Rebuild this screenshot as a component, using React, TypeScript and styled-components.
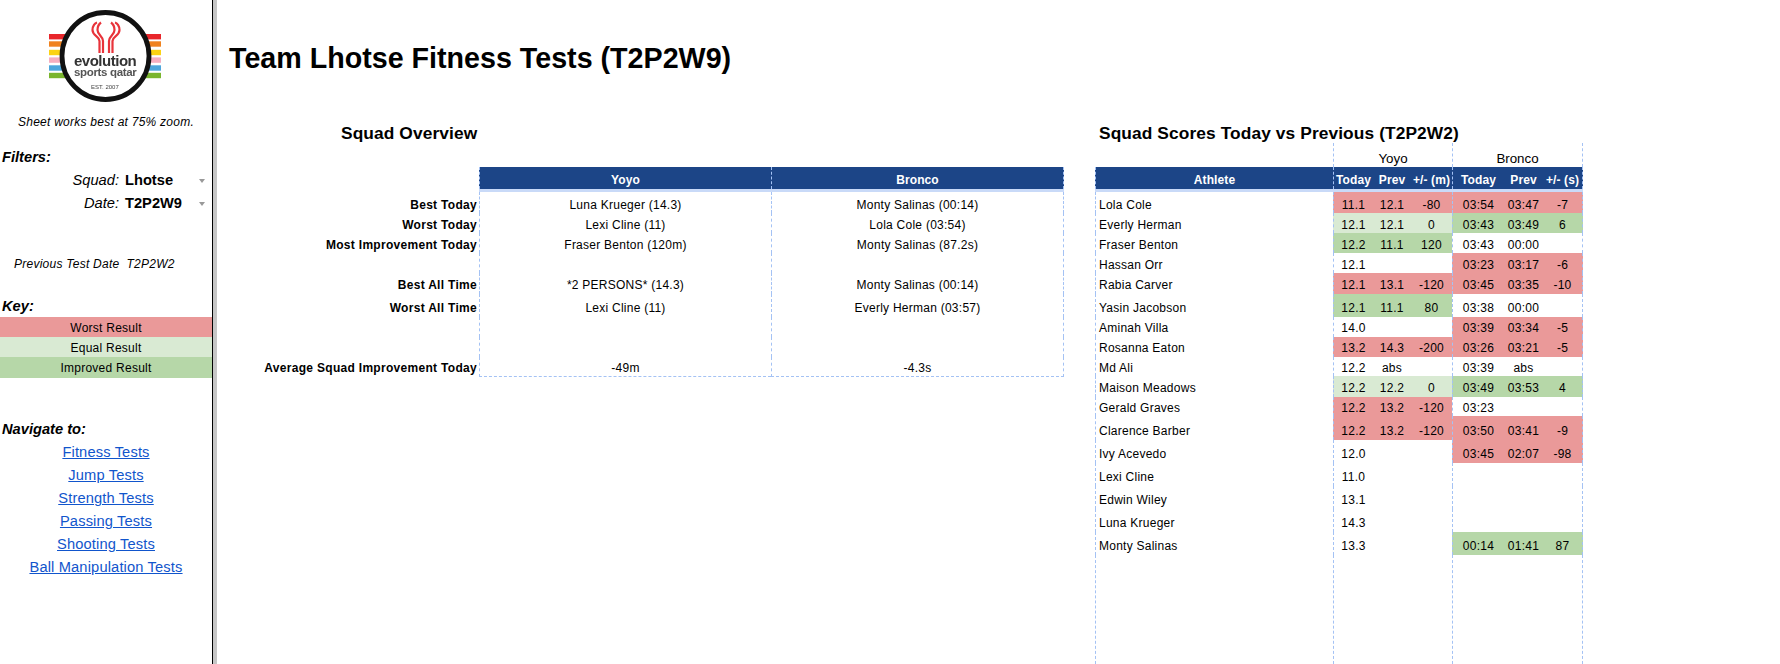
import styled, { createGlobalStyle } from 'styled-components'

type Tone = 'worst' | 'equal' | 'improved' | undefined

type Score = {
  athlete: string
  height: number
  low?: boolean
  yoyo: string[]
  yoyoTone?: Tone
  bronco: string[]
  broncoTone?: Tone
}

const TONES: Record<string, string> = {
  worst: '#ea9999',
  equal: '#d9ead3',
  improved: '#b6d7a8',
}

const GRID_LINE = '#a4c2f4'
const SCORE_COLUMNS = '238px 40px 38px 41px 52px 39px 40px'

const overviewRows = [
  { label: 'Best Today', height: 21, low: true, yoyo: 'Luna Krueger (14.3)', bronco: 'Monty Salinas (00:14)' },
  { label: 'Worst Today', height: 20, low: true, yoyo: 'Lexi Cline (11)', bronco: 'Lola Cole (03:54)' },
  { label: 'Most Improvement Today', height: 20, low: true, yoyo: 'Fraser Benton (120m)', bronco: 'Monty Salinas (87.2s)' },
  { label: '', height: 20, yoyo: '', bronco: '' },
  { label: 'Best All Time', height: 21, yoyo: '*2 PERSONS* (14.3)', bronco: 'Monty Salinas (00:14)' },
  { label: 'Worst All Time', height: 23, yoyo: 'Lexi Cline (11)', bronco: 'Everly Herman (03:57)' },
  { label: '', height: 20, yoyo: '', bronco: '' },
  { label: '', height: 20, yoyo: '', bronco: '' },
  { label: 'Average Squad Improvement Today', height: 20, low: true, yoyo: '-49m', bronco: '-4.3s' },
]

const scores: Score[] = [
  { athlete: 'Lola Cole', height: 21, low: true, yoyo: ['11.1', '12.1', '-80'], yoyoTone: 'worst', bronco: ['03:54', '03:47', '-7'], broncoTone: 'worst' },
  { athlete: 'Everly Herman', height: 20, low: true, yoyo: ['12.1', '12.1', '0'], yoyoTone: 'equal', bronco: ['03:43', '03:49', '6'], broncoTone: 'improved' },
  { athlete: 'Fraser Benton', height: 20, low: true, yoyo: ['12.2', '11.1', '120'], yoyoTone: 'improved', bronco: ['03:43', '00:00', ''] },
  { athlete: 'Hassan Orr', height: 20, low: true, yoyo: ['12.1', '', ''], bronco: ['03:23', '03:17', '-6'], broncoTone: 'worst' },
  { athlete: 'Rabia Carver', height: 21, yoyo: ['12.1', '13.1', '-120'], yoyoTone: 'worst', bronco: ['03:45', '03:35', '-10'], broncoTone: 'worst' },
  { athlete: 'Yasin Jacobson', height: 23, yoyo: ['12.1', '11.1', '80'], yoyoTone: 'improved', bronco: ['03:38', '00:00', ''] },
  { athlete: 'Aminah Villa', height: 20, yoyo: ['14.0', '', ''], bronco: ['03:39', '03:34', '-5'], broncoTone: 'worst' },
  { athlete: 'Rosanna Eaton', height: 20, yoyo: ['13.2', '14.3', '-200'], yoyoTone: 'worst', bronco: ['03:26', '03:21', '-5'], broncoTone: 'worst' },
  { athlete: 'Md Ali', height: 19, low: true, yoyo: ['12.2', 'abs', ''], bronco: ['03:39', 'abs', ''] },
  { athlete: 'Maison Meadows', height: 21, yoyo: ['12.2', '12.2', '0'], yoyoTone: 'equal', bronco: ['03:49', '03:53', '4'], broncoTone: 'improved' },
  { athlete: 'Gerald Graves', height: 19, low: true, yoyo: ['12.2', '13.2', '-120'], yoyoTone: 'worst', bronco: ['03:23', '', ''] },
  { athlete: 'Clarence Barber', height: 24, yoyo: ['12.2', '13.2', '-120'], yoyoTone: 'worst', bronco: ['03:50', '03:41', '-9'], broncoTone: 'worst' },
  { athlete: 'Ivy Acevedo', height: 23, yoyo: ['12.0', '', ''], bronco: ['03:45', '02:07', '-98'], broncoTone: 'worst' },
  { athlete: 'Lexi Cline', height: 23, yoyo: ['11.0', '', ''], bronco: ['', '', ''] },
  { athlete: 'Edwin Wiley', height: 23, yoyo: ['13.1', '', ''], bronco: ['', '', ''] },
  { athlete: 'Luna Krueger', height: 23, yoyo: ['14.3', '', ''], bronco: ['', '', ''] },
  { athlete: 'Monty Salinas', height: 23, yoyo: ['13.3', '', ''], bronco: ['00:14', '01:41', '87'], broncoTone: 'improved' },
]

const links = [
  'Fitness Tests',
  'Jump Tests',
  'Strength Tests',
  'Passing Tests',
  'Shooting Tests',
  'Ball Manipulation Tests',
]

const STRIPES = [
  { y: 34, color: '#e8262b' },
  { y: 41.3, color: '#f0821e' },
  { y: 49.8, color: '#fbd314' },
  { y: 57.4, color: '#f6aec0' },
  { y: 65.3, color: '#4ea6dc' },
  { y: 72.8, color: '#7ab52e' },
]

function Logo() {
  return (
    <LogoSvg width="112" height="94" viewBox="49 10 112 94">
      {STRIPES.map(s => (
        <rect key={s.y} x="49" y={s.y} width="112" height="5.4" fill={s.color} />
      ))}
      <circle cx="105.5" cy="56" r="43.5" fill="#fff" stroke="#111" strokeWidth="4.8" />
      <g fill="none" stroke="#e8333a" strokeWidth="2.2">
        <path d="M99.5 53V41C99.5 36 92.5 36 92.5 30C92.5 26 95 23 97 22.5" />
        <path d="M103 53V41C103 36 97.5 35 97.5 30C97.5 26 99 24 101 22.5" />
        <path d="M112.5 53V41C112.5 36 119.5 36 119.5 30C119.5 26 117 23 115 22.5" />
        <path d="M109 53V41C109 36 114.5 35 114.5 30C114.5 26 113 24 111 22.5" />
      </g>
      <text x="74" y="66" textLength="63" fontFamily="Liberation Sans" fontSize="15" fontWeight="700" fill="#333">
        evolution
      </text>
      <text x="74" y="76" textLength="63" fontFamily="Liberation Sans" fontSize="11.5" fontWeight="700" fill="#555">
        sports qatar
      </text>
      <text x="91" y="89" textLength="28" fontFamily="Liberation Sans" fontSize="6" fill="#444">
        EST. 2007
      </text>
    </LogoSvg>
  )
}

function Filter({ label, value }: { label: string; value: string }) {
  return (
    <FilterRow>
      <FilterLabel>{label}</FilterLabel>
      <FilterValue>{value}</FilterValue>
      <Caret />
    </FilterRow>
  )
}

export default function App() {
  return (
    <Page>
      <GlobalStyle />
      <Sidebar>
        <LogoWrap>
          <Logo />
        </LogoWrap>
        <Note>Sheet works best at 75% zoom.</Note>
        <SideHeading $top={14}>Filters:</SideHeading>
        <Filter label="Squad:" value="Lhotse" />
        <Filter label="Date:" value="T2P2W9" />
        <PreviousDate>
          <span>Previous Test Date</span>
          <span>T2P2W2</span>
        </PreviousDate>
        <SideHeading $top={20}>Key:</SideHeading>
        <KeyRow $tone="worst" $height={20}>Worst Result</KeyRow>
        <KeyRow $tone="equal" $height={20}>Equal Result</KeyRow>
        <KeyRow $tone="improved" $height={21}>Improved Result</KeyRow>
        <SideHeading $top={40}>Navigate to:</SideHeading>
        <Links>
          {links.map(link => (
            <NavLink key={link} href="#">{link}</NavLink>
          ))}
        </Links>
      </Sidebar>
      <Main>
        <Title>Team Lhotse Fitness Tests (T2P2W9)</Title>
        <Sections>
          <Overview>
            <OverviewHeading>Squad Overview</OverviewHeading>
            <OverviewHead>
              <span />
              <HeadCell $line>Yoyo</HeadCell>
              <HeadCell $line $end>Bronco</HeadCell>
            </OverviewHead>
            <HeadRule $indent={262} />
            {overviewRows.map((row, i) => (
              <OverviewRow key={i} $height={row.height} $low={row.low}>
                <RowLabel>{row.label}</RowLabel>
                <OverviewCell>{row.yoyo}</OverviewCell>
                <OverviewCell $end>{row.bronco}</OverviewCell>
              </OverviewRow>
            ))}
          </Overview>
          <Scores>
            <ScoresHeading>Squad Scores Today vs Previous (T2P2W2)</ScoresHeading>
            <GroupRow>
              <GroupCell />
              <GroupCell>Yoyo</GroupCell>
              <GroupCell $end>Bronco</GroupCell>
            </GroupRow>
            <ScoreHead>
              <HeadCell $line>Athlete</HeadCell>
              <HeadCell $line>Today</HeadCell>
              <HeadCell>Prev</HeadCell>
              <HeadCell>+/- (m)</HeadCell>
              <HeadCell $line>Today</HeadCell>
              <HeadCell>Prev</HeadCell>
              <HeadCell $end>+/- (s)</HeadCell>
            </ScoreHead>
            <HeadRule $indent={0} />
            {scores.map(score => (
              <ScoreRow key={score.athlete} $height={score.height} $low={score.low}>
                <Athlete>{score.athlete}</Athlete>
                {score.yoyo.map((value, i) => (
                  <ScoreCell key={i} $tone={score.yoyoTone} $line={i === 0}>{value}</ScoreCell>
                ))}
                {score.bronco.map((value, i) => (
                  <ScoreCell key={i} $tone={score.broncoTone} $line={i === 0} $end={i === 2}>{value}</ScoreCell>
                ))}
              </ScoreRow>
            ))}
            <ScoreFiller>
              <GroupCell />
              <GroupCell />
              <GroupCell $end />
            </ScoreFiller>
          </Scores>
        </Sections>
      </Main>
    </Page>
  )
}

const GlobalStyle = createGlobalStyle`
  html, body {
    margin: 0;
    padding: 0;
    background: #fff;
    overflow: hidden;
  }

  * {
    box-sizing: border-box;
  }
`

const Page = styled.div`
  display: flex;
  width: 1780px;
  height: 664px;
  font-family: 'Liberation Sans', Arial, sans-serif;
  font-size: 12px;
  letter-spacing: 0.25px;
  color: #000;
`

const Sidebar = styled.aside`
  flex: none;
  display: flex;
  flex-direction: column;
  width: 213px;
  border-right: 1px solid #000;
`

const LogoWrap = styled.div`
  display: flex;
  height: 112px;
  padding: 10px 0 0 49px;
`

const LogoSvg = styled.svg`
  filter: blur(0.4px);
`

const Note = styled.div`
  height: 20px;
  line-height: 20px;
  text-align: center;
  font-style: italic;
`

const SideHeading = styled.div<{ $top: number }>`
  margin-top: ${props => props.$top}px;
  padding-left: 2px;
  height: 22px;
  line-height: 22px;
  font-size: 14.67px;
  font-weight: 700;
  font-style: italic;
  letter-spacing: 0;
`

const FilterRow = styled.div`
  position: relative;
  display: grid;
  grid-template-columns: 119px 1fr;
  column-gap: 6px;
  height: 23px;
  padding-top: 1px;
  line-height: 23px;
  font-size: 14.67px;
  letter-spacing: 0;
`

const FilterLabel = styled.span`
  text-align: right;
  font-style: italic;
`

const FilterValue = styled.span`
  font-weight: 700;
`

const Caret = styled.span`
  position: absolute;
  top: 11px;
  left: 199px;
  border-style: solid;
  border-width: 4px 3.5px 0;
  border-color: #999 transparent transparent;
`

const PreviousDate = styled.div`
  display: flex;
  gap: 7px;
  margin-top: 39px;
  padding-left: 14px;
  height: 22px;
  line-height: 22px;
  font-style: italic;
`

const KeyRow = styled.div<{ $tone: string; $height: number }>`
  height: ${props => props.$height}px;
  padding-top: 1px;
  line-height: ${props => props.$height}px;
  text-align: center;
  background: ${props => TONES[props.$tone]};
`

const Links = styled.nav`
  display: flex;
  flex-direction: column;
  align-items: center;
  margin-top: 1px;
`

const NavLink = styled.a`
  height: 23px;
  line-height: 23px;
  font-size: 14.67px;
  letter-spacing: 0.15px;
  color: #1155cc;
`

const Main = styled.main`
  flex: 1;
  display: flex;
  flex-direction: column;
  border-left: 4px solid #c6c6c6;
  min-width: 0;
`

const Title = styled.h1`
  margin: 0;
  padding: 39px 0 0 12px;
  height: 122px;
  font-size: 28.67px;
  line-height: 38px;
  font-weight: 700;
  letter-spacing: 0;
`

const Sections = styled.div`
  flex: 1;
  display: flex;
  min-height: 0;
`

const Overview = styled.section`
  flex: none;
  width: 878px;
`

const OverviewHeading = styled.h2`
  margin: 0;
  padding-left: 124px;
  height: 45px;
  font-size: 17.33px;
  line-height: 22px;
  font-weight: 700;
  letter-spacing: 0.1px;
`

const OverviewColumns = `262px 292px 293px`

const OverviewHead = styled.div`
  display: grid;
  grid-template-columns: ${OverviewColumns};
  height: 22px;
`

const HeadCell = styled.div<{ $line?: boolean; $end?: boolean }>`
  display: flex;
  align-items: center;
  justify-content: center;
  padding-top: 3px;
  background: #1c4587;
  color: #fff;
  font-weight: 700;
  letter-spacing: 0.1px;
  border-left: ${props => (props.$line ? `1px dashed ${GRID_LINE}` : '0')};
  border-right: ${props => (props.$end ? `1px dashed ${GRID_LINE}` : '0')};
`

const HeadRule = styled.div<{ $indent: number }>`
  height: 3px;
  margin-left: ${props => props.$indent}px;
  background: #c9daf8;
  width: ${props => (props.$indent ? '585px' : '488px')};
`

const OverviewRow = styled.div<{ $height: number; $low?: boolean }>`
  display: grid;
  grid-template-columns: ${OverviewColumns};
  height: ${props => props.$height}px;
  line-height: ${props => (props.$low ? 15 : 17)}px;
  align-items: stretch;
`

const RowLabel = styled.div`
  display: flex;
  align-items: flex-end;
  justify-content: flex-end;
  padding-right: 2px;
  font-weight: 700;
  letter-spacing: 0.3px;

  ${OverviewRow}:last-child & {
    padding-bottom: 1px;
  }
`

const OverviewCell = styled.div<{ $end?: boolean }>`
  display: flex;
  align-items: flex-end;
  justify-content: center;
  border-left: 1px dashed ${GRID_LINE};
  border-right: ${props => (props.$end ? `1px dashed ${GRID_LINE}` : '0')};

  ${OverviewRow}:last-child & {
    border-bottom: 1px dashed ${GRID_LINE};
  }
`

const Scores = styled.section`
  flex: none;
  display: flex;
  flex-direction: column;
  width: 488px;
`

const ScoresHeading = styled(OverviewHeading)`
  padding-left: 4px;
  height: 21px;
`

const GroupRow = styled.div`
  display: grid;
  grid-template-columns: 238px 119px 131px;
  height: 24px;
  font-size: 13.33px;
  letter-spacing: 0;
`

const GroupCell = styled.div<{ $end?: boolean }>`
  display: flex;
  align-items: flex-end;
  justify-content: center;
  padding-bottom: 1px;
  border-right: ${props => (props.$end ? `1px dashed ${GRID_LINE}` : '0')};

  &:not(:first-child) {
    border-left: 1px dashed ${GRID_LINE};
  }
`

const ScoreHead = styled.div`
  display: grid;
  grid-template-columns: ${SCORE_COLUMNS};
  height: 22px;
`

const ScoreRow = styled.div<{ $height: number; $low?: boolean }>`
  display: grid;
  grid-template-columns: ${SCORE_COLUMNS};
  height: ${props => props.$height}px;
  line-height: ${props => (props.$low ? 15 : 17)}px;
`

const Athlete = styled.div`
  display: flex;
  align-items: flex-end;
  padding-left: 3px;
  border-left: 1px dashed ${GRID_LINE};
`

const ScoreCell = styled.div<{ $tone?: Tone; $line?: boolean; $end?: boolean }>`
  display: flex;
  align-items: flex-end;
  justify-content: center;
  background: ${props => (props.$tone ? TONES[props.$tone] : 'transparent')};
  border-left: ${props => (props.$line ? `1px dashed ${GRID_LINE}` : '0')};
  border-right: ${props => (props.$end ? `1px dashed ${GRID_LINE}` : '0')};
`

const ScoreFiller = styled.div`
  flex: 1;
  display: grid;
  grid-template-columns: 238px 119px 131px;

  & > div:first-child {
    border-left: 1px dashed ${GRID_LINE};
  }
`
